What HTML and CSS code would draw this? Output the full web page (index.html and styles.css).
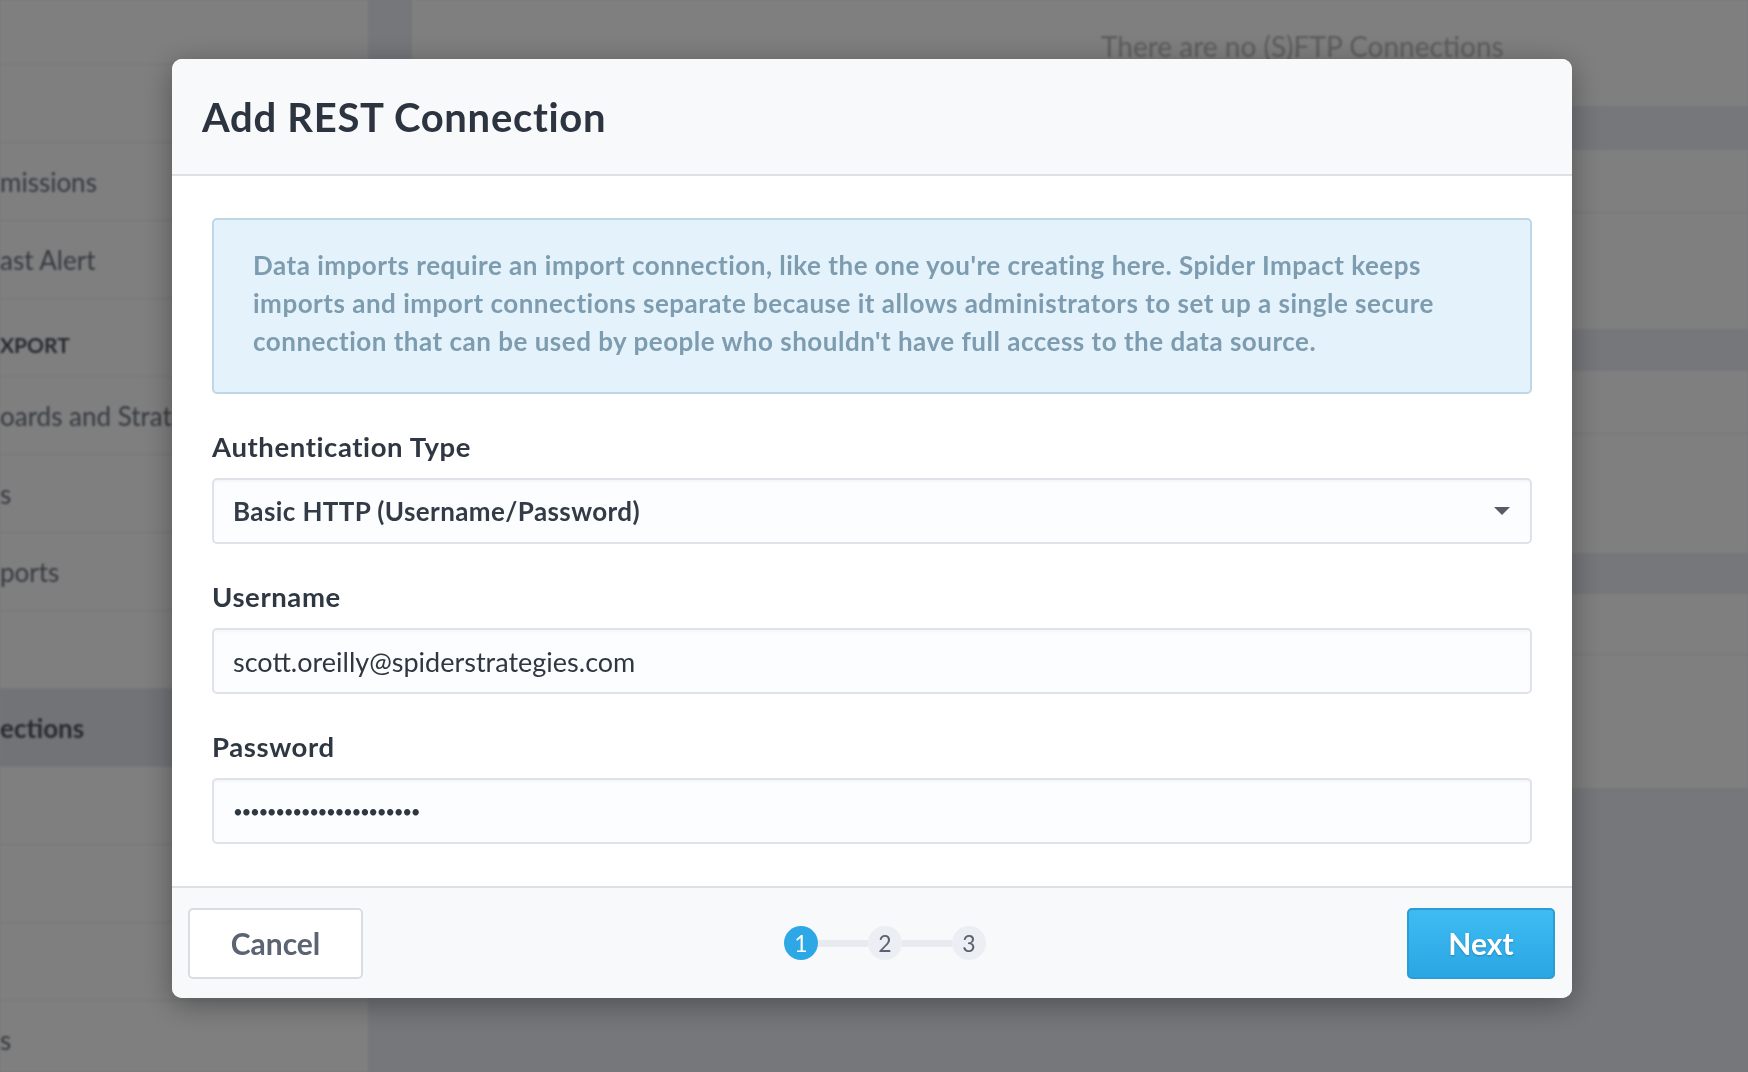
FILE: index.html
```html
<!DOCTYPE html>
<html lang="en">
<head>
<meta charset="utf-8">
<title>Add REST Connection</title>
<link rel="stylesheet" href="styles.css">
</head>
<body>
<div class="page">
  <aside class="sidebar">
    <div class="side-row first"></div>
    <div class="side-row"></div>
    <div class="side-row">missions</div>
    <div class="side-row">ast Alert</div>
    <div class="side-row side-head">XPORT</div>
    <div class="side-row">oards and Strategy Maps</div>
    <div class="side-row">s</div>
    <div class="side-row">ports</div>
    <div class="side-row"></div>
    <div class="side-row active">ections</div>
    <div class="side-row"></div>
    <div class="side-row"></div>
    <div class="side-row"></div>
    <div class="side-row">s</div>
  </aside>
  <div class="gutter"></div>
  <main class="panel">
    <div class="empty">There are no (S)FTP Connections</div>
    <div class="thead h1"></div>
    <div class="trow r1"></div>
    <div class="trow r2"></div>
    <div class="thead h2"></div>
    <div class="trow r3"></div>
    <div class="trow r4"></div>
    <div class="thead h3"></div>
    <div class="trow r5"></div>
    <div class="trow r6"></div>
  </main>
</div>

<div class="overlay">
  <div class="modal">
    <header class="modal-head">
      <h1 class="modal-title">Add REST Connection</h1>
    </header>
    <div class="modal-body">
      <div class="info">Data imports require an import connection, like the one you're creating here. Spider Impact keeps<br>imports and import connections separate because it allows administrators to set up a single secure<br>connection that can be used by people who shouldn't have full access to the data source.</div>
      <div class="field">
        <label class="field-label">Authentication Type</label>
        <div class="control select">
          <span>Basic HTTP (Username/Password)</span>
          <svg class="caret" width="16" height="8" viewBox="0 0 16 8"><path d="M0 0 H16 L8 8 Z" fill="#565b66"/></svg>
        </div>
      </div>
      <div class="field">
        <label class="field-label">Username</label>
        <div class="control input">scott.oreilly@spiderstrategies.com</div>
      </div>
      <div class="field">
        <label class="field-label">Password</label>
        <div class="control input"><span class="dots">••••••••••••••••••••••</span></div>
      </div>
    </div>
    <footer class="modal-foot">
      <button class="btn btn-cancel">Cancel</button>
      <div class="steps">
        <span class="step current">1</span>
        <span class="step-line"></span>
        <span class="step">2</span>
        <span class="step-line"></span>
        <span class="step">3</span>
      </div>
      <button class="btn btn-next">Next</button>
    </footer>
  </div>
</div>
</body>
</html>
```

FILE: styles.css
```css
html, body {
  margin: 0;
  padding: 0;
}
body {
  width: 1748px;
  height: 1072px;
  overflow: hidden;
  background: #eceef6;
  font-family: Lato, "Noto Sans", "DejaVu Sans", sans-serif;
  position: relative;
}

/* background page */
.page {
  display: flex;
  align-items: flex-start;
  height: 1072px;
  filter: blur(1.3px);
}
.sidebar {
  flex: none;
  width: 368px;
  height: 1072px;
  background: #ffffff;
}
.side-row {
  height: 78px;
  box-sizing: border-box;
  border-bottom: 1px solid #e8eaee;
  display: flex;
  align-items: center;
  font-size: 26px;
  color: #6b7380;
  white-space: nowrap;
  overflow: hidden;
}
.side-row.first {
  height: 65px;
}
.side-head {
  font-size: 21px;
  font-weight: 700;
  color: #4d5561;
  padding-top: 14px;
}
.side-row.active {
  background: #e4e7ef;
  font-weight: 700;
  color: #4d5561;
}
.gutter {
  flex: none;
  width: 44px;
}
.panel {
  flex: 1;
  background: #ffffff;
  height: 788px;
}
.empty {
  height: 106px;
  box-sizing: border-box;
  padding-top: 26px;
  padding-left: 689px;
  line-height: 40px;
  font-size: 28px;
  color: #b9b9b9;
}
.thead {
  background: #eceef6;
}
.thead.h1 { height: 44px; }
.thead.h2 { height: 42px; }
.thead.h3 { height: 41px; }
.trow {
  box-sizing: border-box;
}
.trow.r1 { height: 63px; border-bottom: 1px solid #e8eaee; }
.trow.r2 { height: 116px; }
.trow.r3 { height: 63px; border-bottom: 1px solid #e8eaee; }
.trow.r4 { height: 119px; }
.trow.r5 { height: 61px; border-bottom: 1px solid #e8eaee; }
.trow.r6 { height: 133px; }

/* overlay + modal */
.overlay {
  position: fixed;
  inset: 0;
  background: rgba(0, 0, 0, 0.5);
  display: flex;
  justify-content: flex-start;
  align-items: flex-start;
  padding-top: 59px;
  padding-left: 172px;
}
.modal {
  width: 1400px;
  background: #ffffff;
  border-radius: 10px;
  overflow: hidden;
  box-shadow: 0 6px 30px rgba(0, 0, 0, 0.35);
}
.modal-head {
  height: 117px;
  box-sizing: border-box;
  border-bottom: 2px solid #dde1e6;
  background: #f8f9fb;
  display: flex;
  align-items: center;
  padding: 0 30px;
}
.modal-title {
  margin: 0;
  font-size: 40px;
  font-weight: 700;
  letter-spacing: 0.7px;
  color: #2c3440;
}
.modal-body {
  padding: 42px 40px 42px 40px;
}
.info {
  border: 2px solid #bdd7e4;
  background: #e4f3fb;
  border-radius: 5px;
  padding: 26px 39px 32px;
  color: #7e9cb0;
  font-size: 26px;
  font-weight: 700;
  letter-spacing: 0.5px;
  line-height: 38px;
  white-space: nowrap;
}
.field {
  margin-top: 36px;
}
.field-label {
  display: block;
  font-size: 27.5px;
  font-weight: 700;
  letter-spacing: 0.6px;
  color: #2f3742;
  line-height: 34px;
  margin-bottom: 14px;
}
.control {
  height: 66px;
  box-sizing: border-box;
  border: 2px solid #dfe2e8;
  border-radius: 5px;
  background: #fcfdfe;
  padding: 0 19px;
  display: flex;
  align-items: center;
  font-size: 27px;
  color: #2f3742;
  box-shadow: inset 0 2px 2px rgba(0, 0, 0, 0.03);
}
.select {
  justify-content: space-between;
  font-size: 26px;
  font-weight: 700;
  letter-spacing: 0.4px;
  color: #333b47;
  padding-right: 20px;
}
.caret {
  display: block;
}
.dots {
  font-size: 17px;
  letter-spacing: -1.4px;
  color: #2f3742;
}

.modal-foot {
  height: 112px;
  box-sizing: border-box;
  border-top: 2px solid #dde1e6;
  background: #f8f9fb;
  display: flex;
  align-items: center;
  justify-content: space-between;
  padding: 0 17px 0 16px;
}
.btn {
  font-family: inherit;
  height: 71px;
  box-sizing: border-box;
  border-radius: 5px;
  font-size: 30px;
  font-weight: 700;
  cursor: pointer;
}
.btn-cancel {
  width: 175px;
  border: 2px solid #d9dde3;
  background: #ffffff;
  color: #5a6473;
}
.btn-next {
  width: 148px;
  border: 2px solid #2a9cd6;
  background: linear-gradient(#3ebcf2, #2aa6e4);
  color: #ffffff;
  text-shadow: 0 1px 2px rgba(0, 0, 0, 0.25);
}
.steps {
  display: flex;
  align-items: center;
}
.step {
  width: 34px;
  height: 34px;
  border-radius: 50%;
  background: #ebeef2;
  color: #5a6170;
  font-size: 23px;
  display: flex;
  align-items: center;
  justify-content: center;
}
.step.current {
  background: #2da7e5;
  color: #ffffff;
}
.step-line {
  width: 50px;
  height: 7px;
  background: #e7eaef;
}
```
